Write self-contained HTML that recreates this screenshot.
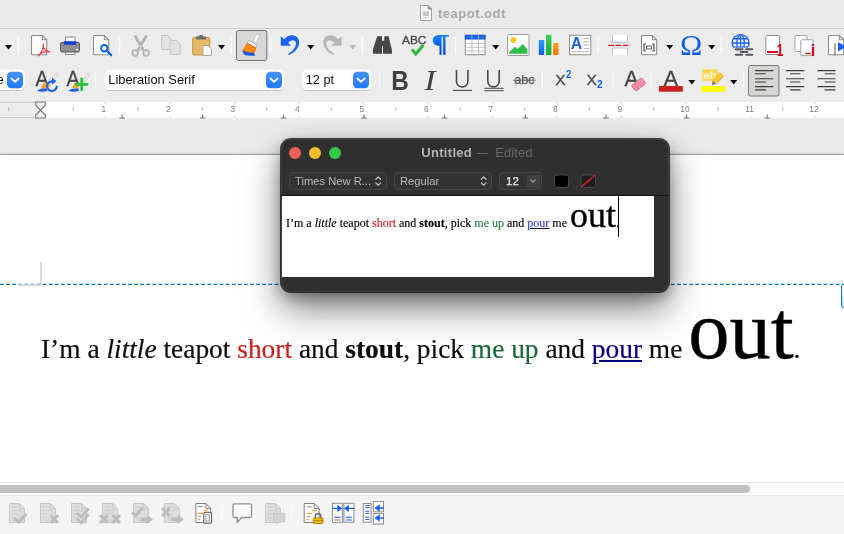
<!DOCTYPE html>
<html><head><meta charset="utf-8"><title>teapot.odt</title>
<style>
*{box-sizing:border-box;margin:0;padding:0}
html,body{width:844px;height:534px;overflow:hidden;background:#ececec;font-family:"Liberation Sans",sans-serif}
#app{position:relative;width:844px;height:534px;overflow:hidden;background:#ececec}
.abs{position:absolute}
#titlebar{left:0;top:0;width:844px;height:29px;background:#ebebeb;border-bottom:1px solid #cfcfcf}
#title{left:438.2px;top:6px;font-size:13px;font-weight:bold;color:#a8a8a8;letter-spacing:.5px;will-change:transform}
#docbg{left:0;top:118px;width:844px;height:36px;background:#ebebeb}
#page{left:0;top:154px;width:844px;height:329px;background:#fff;border-top:1px solid #9c9c9c;box-shadow:0 -1px 3px rgba(0,0,0,.09)}
#hscroll{left:0;top:482px;width:844px;height:14px;background:#fafafa;border-top:1px solid #e4e4e4;border-bottom:1px solid #e8e8e8}
#thumb{left:-6px;top:485px;width:756px;height:8px;border-radius:4px;background:#c1c1c1}
#btbbg{left:0;top:496px;width:844px;height:38px;background:#f4f4f4}
#ov{left:0;top:0;width:844px;height:534px;will-change:transform}
#ov text{font-family:"Liberation Sans",sans-serif}
.sep{stroke:#fbfbfb;stroke-width:1.2;fill:none}
#maintext{left:41px;top:282px;white-space:nowrap;font-family:"Liberation Serif",serif;font-size:27.4px;color:#0c0c0c;-webkit-text-stroke:.18px;will-change:transform}
#maintext .big{font-size:82.5px;-webkit-text-stroke:.4px #000;color:#000;margin-left:-1px}
#win{will-change:transform;left:281px;top:139px;width:388px;height:153px;border-radius:10px;background:#2f2f2f;box-shadow:inset 0 0 0 1px rgba(255,255,255,.07),0 0 0 1px rgba(0,0,0,.7),0 16px 36px rgba(0,0,0,.52),0 5px 14px rgba(0,0,0,.3)}
#wtitle{left:0;top:6px;width:388px;text-align:center;font-size:13px;color:#858585;white-space:nowrap}
.wt{top:6px;font-size:13px;white-space:nowrap}
.pop{height:18px;top:33px;border:1px solid #444;border-radius:4px;background:#323232;color:#bababa;font-size:11.2px;line-height:16px;padding-left:5px;white-space:nowrap}
#wtext{left:1px;top:57px;width:372px;height:81px;background:#fff;overflow:hidden}
#wline{left:3.7px;top:-1px;-webkit-text-stroke:.15px;white-space:nowrap;font-family:"Liberation Serif",serif;font-size:12px;color:#000;line-height:41px;will-change:transform}
#wline .big{font-size:36px;-webkit-text-stroke:.35px #000}
#caret{left:336px;top:0;width:1px;height:41px;background:#000}
</style></head><body>
<div id="app">
<div id="titlebar" class="abs"></div>
<div id="title" class="abs">teapot.odt</div>
<div id="docbg" class="abs"></div>
<div id="page" class="abs"></div>
<div id="hscroll" class="abs"></div>
<div id="thumb" class="abs"></div>
<div id="btbbg" class="abs"></div>
<svg id="ov" class="abs" width="844" height="534" viewBox="0 0 844 534"><path d="M420.5 5.5h7.5l3.5 3.5v11.5h-11z" fill="#f8f8f8" stroke="#a4a4a4"/><path d="M428 5.5l3.5 3.5h-3.5z" fill="#8a8a8a" stroke="#8a8a8a" stroke-width=".6"/><rect x="423" y="11.5" width="6" height="4.5" fill="#c4c4c4"/><path d="M423 17.5h6" stroke="#d0d0d0" stroke-width=".8"/><!-- ROW 1 -->
<g id="row1">
<path d="M5 45h7l-3.5 4.5z" fill="#000"/>
<path class="sep" d="M18.5 37v17"/>
<!-- pdf -->
<path d="M32.5 35.5h9.8l4.4 4.3v13.9q0 1-1 1h-13.2q-1 0-1-1v-17.2q0-1 1-1z" fill="#fff" stroke="#8a8a90" stroke-width="1.1"/>
<path d="M42.3 35.5v4.3h4.4" fill="none" stroke="#8a8a90" stroke-width="1.1"/>
<path d="M43.2 44c.4 3.5 0 7-5 11.9M43.2 44c-.2 3.5 1 6.6 6.8 8M38.2 55.9c3-3.9 7.3-4.7 11.8-3.9" fill="none" stroke="#f8403a" stroke-width="1.25" stroke-linecap="round"/>
<!-- printer -->
<rect x="65.5" y="37" width="9.5" height="6" fill="#fff" stroke="#8c8c8c"/>
<rect x="65.5" y="50" width="9.5" height="4.5" fill="#fff" stroke="#8c8c8c"/>
<rect x="60.5" y="42.5" width="19" height="9.5" rx="1.5" fill="#8e8e8e" stroke="#58585a"/>
<rect x="63.8" y="41.2" width="12.4" height="3.6" fill="#1442d2"/>
<rect x="76" y="49" width="2.3" height="1.3" fill="#fff"/>
<!-- preview -->
<path d="M94.5 35.5h9.8l4.4 4.3v13.9q0 1-1 1h-13.2q-1 0-1-1v-17.2q0-1 1-1z" fill="#fff" stroke="#8a8a90" stroke-width="1.1"/>
<path d="M104.3 35.5v4.3h4.4" fill="none" stroke="#8a8a90" stroke-width="1.1"/>
<circle cx="104.3" cy="48.3" r="3.2" fill="#fff" stroke="#0a64f2" stroke-width="2"/>
<path d="M106.8 50.8l4.3 4.3" stroke="#0a64f2" stroke-width="2.2" stroke-linecap="round"/>
<path class="sep" d="M119.7 37v17"/>
<!-- scissors -->
<g stroke="#b2b2b2" fill="none">
<path d="M134.8 35.5l8.7 15M146.5 35.5l-8.7 15" stroke-width="2.7"/>
<circle cx="135.2" cy="53" r="2.8" stroke-width="1.7"/>
<circle cx="146.1" cy="53" r="2.8" stroke-width="1.7"/>
</g>
<circle cx="140.6" cy="46.5" r="1" fill="#ececec"/>
<!-- copy -->
<path d="M161.7 35.5h6l3.5 3.5v10.5h-9.5z" fill="#e2e2e2" stroke="#c6c6c6"/>
<path d="M170.2 40.5h6.5l3.5 3.5v10.5h-10z" fill="#e2e2e2" stroke="#c6c6c6"/>
<!-- paste -->
<rect x="192.7" y="37.5" width="17" height="17.5" rx="1.5" fill="#e6b968" stroke="#c4923c"/>
<path d="M196 36.5h2.5c0-2 5-2 5 0h2.5v3h-10z" fill="#6e6e6e"/>
<path d="M203 45.5h5l3.5 3.5v6.5h-8.5z" fill="#fff" stroke="#a8a8a8"/>
<path d="M218 45h7l-3.5 4.5z" fill="#000"/>
<path class="sep" d="M231.4 37v17"/>
<!-- clone brush pressed -->
<rect x="236.5" y="30.5" width="30.3" height="30" rx="2" fill="#d6d9d4" stroke="#707070"/>
<path d="M253 41.1l3.2 1.8 3.4-7.4-3.2-1.8z" fill="#fff" stroke="#b0b0b0" stroke-width=".7"/>
<path d="M248.5 40.4l8.7 4.6-1.2 2.9-8.7-4.6z" fill="#f4f4f4" stroke="#a4a4a4" stroke-width=".7"/>
<path d="M247.3 43.3l8.7 4.6-2.1 5q-5.9.1-11.2-2.1z" fill="#ff8a00" stroke="#dc4a10" stroke-width=".6"/>
<path d="M242.7 50.8q5.3 2.2 11.2 2.1l1.4 2.6q-7.3.8-10.5-.5-2.2-1.5-2.1-4.2z" fill="#1c58dc"/>
<path class="sep" d="M270.5 37v17"/>
<!-- undo -->
<path d="M280.8 36.3v9.5h10.4l-3-2.9c2.3-3.4 7.3-3.9 7.8.1.3 4-3.5 8.5-8 11l1 1c6.5-3 10.5-8 10.2-13-.4-7-9.7-9.5-14.9-2.8z" fill="#1a62ea"/>
<path d="M307.2 45h7l-3.5 4.5z" fill="#000"/>
<!-- redo -->
<path transform="translate(622.4 0) scale(-1 1)" d="M280.8 36.3v9.5h10.4l-3-2.9c2.3-3.4 7.3-3.9 7.8.1.3 4-3.5 8.5-8 11l1 1c6.5-3 10.5-8 10.2-13-.4-7-9.7-9.5-14.9-2.8z" fill="#b6b6b6"/>
<path d="M349.2 45h7l-3.5 4.5z" fill="#b8b8b8"/>
<path class="sep" d="M362.4 37v17"/>
<!-- binoculars -->
<path d="M377.2 36.2h4.8v4.6h2.3v-4.6h4.3l2.7 11.3.6 2.5v3.7h-8.9v-7.5h-1v7.5h-9.1v-3.7l.6-2.5z" fill="#46464b"/>
<!-- ABC check -->
<text x="402" y="43.6" font-size="11.4" fill="#48484a" stroke="#48484a" stroke-width=".35" textLength="24.3" lengthAdjust="spacingAndGlyphs">ABC</text>
<path d="M412 49.4l3.8 4.5 7.7-8.9" fill="none" stroke="#2db83a" stroke-width="3"/>
<!-- pilcrow -->
<defs><linearGradient id="gb" x1="0" y1="0" x2="0" y2="1"><stop offset="0" stop-color="#0a84ff"/><stop offset="1" stop-color="#0a3fd8"/></linearGradient>
<linearGradient id="gb2" x1="0" y1="0" x2="0" y2="1"><stop offset="0" stop-color="#2ea0ff"/><stop offset="1" stop-color="#0a5ce8"/></linearGradient>
<linearGradient id="gg" x1="0" y1="0" x2="0" y2="1"><stop offset="0" stop-color="#3cd05a"/><stop offset="1" stop-color="#18b030"/></linearGradient>
<linearGradient id="go" x1="0" y1="0" x2="0" y2="1"><stop offset="0" stop-color="#ffa030"/><stop offset="1" stop-color="#f07800"/></linearGradient></defs>
<path d="M439.5 35h9.5l.2 1.4-3.7.4v18h-2.4v-18h-1.5v18h-2.1v-8.8c-4 0-6.7-2.2-6.7-5.7s3.5-5.3 6.7-5.3z" fill="url(#gb)"/>
<path class="sep" d="M455.6 37v17"/>
<!-- table -->
<rect x="465.3" y="35.3" width="19.7" height="19.4" fill="#fff" stroke="#8c8c8c"/>
<rect x="465.3" y="35.3" width="19.7" height="3.7" fill="#1a6cf0" stroke="#1450d0"/>
<path d="M465.3 43.4h19.7M465.3 47.2h19.7M465.3 51h19.7M471.9 35.3v19.4M478.5 35.3v19.4" stroke="#b4b4b4" fill="none" stroke-width=".8"/>
<path d="M492.2 45h7l-3.5 4.5z" fill="#000"/>
<!-- image -->
<rect x="507.5" y="34.5" width="21.5" height="21" rx="1" fill="#fcfcfc" stroke="#9a9a9a"/>
<circle cx="513.4" cy="40" r="2.9" fill="#ffc414"/>
<path d="M509.2 53.8v-1.5l5.8-5.5 2.8 2.2 5-5 4.6 5.5v4.3z" fill="#2cc04a"/>
<!-- chart -->
<rect x="538.8" y="40" width="5.4" height="15" fill="url(#gb2)"/>
<rect x="546" y="34.8" width="5.4" height="20.2" fill="url(#gg)"/>
<rect x="553.1" y="43" width="5.4" height="12" fill="url(#go)"/>
<!-- textbox -->
<rect x="569.6" y="35.3" width="21.2" height="19.4" fill="#fff" stroke="#8c8c8c"/>
<text x="570.8" y="49.3" font-size="16" font-weight="bold" fill="#1a60e8" textLength="11.5" lengthAdjust="spacingAndGlyphs">A</text>
<path d="M583.5 38.5h5.5M583.5 41.8h5.5M583.5 45.1h5.5M583.5 48.4h5.5M572 51.7h17" stroke="#b0b0b0" fill="none"/>
<path class="sep" d="M598.2 37v17"/>
<!-- page break -->
<path d="M612.5 35v7.5h15v-7.5M612.5 55v-7h15v7" fill="#fff" stroke="#c2c2c2"/>
<path d="M608.3 45.4h22" stroke="#e01020" stroke-width="1.3" stroke-dasharray="5.6 1.6" fill="none"/>
<!-- field -->
<path d="M642.5 35.5h9.8l4.4 4.3v13.9q0 1-1 1h-13.2q-1 0-1-1v-17.2q0-1 1-1z" fill="#fff" stroke="#8a8a90" stroke-width="1.1"/>
<path d="M652.3 35.5v4.3h4.4" fill="none" stroke="#8a8a90" stroke-width="1.1"/>
<path d="M645.8 44h-1.8v7h1.8M652.2 44h1.8v7h-1.8" fill="none" stroke="#4a4a4a" stroke-width="1.2"/>
<rect x="646.3" y="46" width="5.4" height="3" fill="#fff" stroke="#4a4a4a" stroke-width=".9"/>
<path d="M666.2 45h7l-3.5 4.5z" fill="#000"/>
<!-- omega -->
<text x="680" y="55" style="font-family:'Liberation Serif',serif" font-size="29" fill="#0a5cf0" textLength="22.3" lengthAdjust="spacingAndGlyphs">Ω</text>
<path d="M708.2 45h7l-3.5 4.5z" fill="#000"/>
<path class="sep" d="M721.3 37v17"/>
<!-- hyperlink -->
<circle cx="740.6" cy="43" r="8.4" fill="#fff"/>
<g fill="none" stroke="#1a62f4" stroke-width="1.4">
<circle cx="740.6" cy="43" r="8.4"/>
<ellipse cx="740.6" cy="43" rx="3.7" ry="8.4"/>
<path d="M740.6 34.6v16.8M732.2 43h16.8M733.6 38.8h14M733.6 47.2h14"/>
</g>
<path d="M733.5 49.2h11M744 49.2h10.5M738.5 52h11M733.5 54.8h11M744 54.8h10.5" stroke="#ececec" stroke-width="3.6" stroke-linecap="round" opacity=".8"/>
<path d="M735.8 49.2h6.6M746.2 49.2h6.2M740.8 52h6.6M735.8 54.8h6.6M746.2 54.8h6.2" stroke="#58585a" stroke-width="1.9" stroke-linecap="round"/>
<!-- footnote -->
<rect x="765.8" y="35.5" width="13.8" height="19" rx="1" fill="#fff" stroke="#8c8c8c"/>
<path d="M767.2 52h10.7" stroke="#d4001a" stroke-width="1.9"/>
<text x="776.8" y="55.7" font-size="16.2" font-weight="bold" fill="#d4001a" textLength="6.6" lengthAdjust="spacingAndGlyphs">1</text>
<!-- endnote -->
<rect x="795" y="35.5" width="12" height="16" rx="1" fill="#fff" stroke="#a0a0a0"/>
<rect x="800.8" y="39.8" width="12.2" height="15.8" rx="1" fill="#fff" stroke="#a0a0a0"/>
<path d="M805.3 53.5h5.5" stroke="#d4001a" stroke-width="1.3"/>
<text x="810.8" y="55.7" font-size="16.2" font-weight="bold" fill="#d4001a">i</text>
<!-- crossref -->
<path d="M829.5 35.5h9.8l4.4 4.3v13.9q0 1-1 1h-13.2q-1 0-1-1v-17.2q0-1 1-1z" fill="#fff" stroke="#8a8a90" stroke-width="1.1"/>
<path d="M839.3 35.5v4.3h4.4" fill="none" stroke="#8a8a90" stroke-width="1.1"/>
<path d="M835 43.5v12" stroke="#8a8a8a" stroke-width="1.4"/>
<path d="M838 42l8 4.8-8 4.8z" fill="#1a60f0"/>
</g>
<!-- ROW 2 -->
<g id="row2">
<defs><linearGradient id="btn" x1="0" y1="0" x2="0" y2="1"><stop offset="0" stop-color="#4693f9"/><stop offset="1" stop-color="#1f78f6"/></linearGradient>
<filter id="sh" x="-5%" y="-20%" width="110%" height="150%"><feDropShadow dx="0" dy=".6" stdDeviation=".6" flood-color="#000" flood-opacity=".28"/></filter></defs>
<!-- combo1 -->
<rect x="-10" y="69.5" width="35" height="20.6" rx="5" fill="#fff" filter="url(#sh)"/>
<rect x="7" y="71.8" width="16" height="16.4" rx="4.2" fill="url(#btn)"/>
<path d="M11.5 78.6l3.5 3.2 3.5-3.2" fill="none" stroke="#fff" stroke-width="1.9" stroke-linecap="round" stroke-linejoin="round"/>
<text x="-3.4" y="83.6" font-size="13" fill="#111">e</text>
<!-- A refresh -->
<text x="35.4" y="85.9" font-size="22.3" fill="#434347" stroke="#434347" stroke-width=".3" textLength="13" lengthAdjust="spacingAndGlyphs">A</text>
<path d="M48.3 80.5l8.2-7.3 1.3 1.3-7.3 7.8z" fill="#fafafa" stroke="#b0b0b0" stroke-width=".7"/>
<path d="M44 82.3l5.5 1.2-1.5 5.2h-7.5z" fill="#f7a028"/>
<path d="M36.8 90.5q4.2-2.5 9.8-2l.5 2.6q-5.5 1.4-10.3-.6z" fill="#1c5ee0"/>
<circle cx="51.9" cy="86.2" r="3.7" fill="#ececec"/>
<circle cx="49.6" cy="85.7" r="1" fill="#f7a028"/>
<path d="M56.7 85.6a4.8 4.8 0 1 1-4.6-4.2" fill="none" stroke="#1a60e8" stroke-width="2.1"/>
<path d="M52 77.6l4.4 3.6-4.4 3.4z" fill="#1a60e8"/>
<!-- A plus -->
<text x="66.5" y="85.9" font-size="22.3" fill="#434347" stroke="#434347" stroke-width=".3" textLength="13" lengthAdjust="spacingAndGlyphs">A</text>
<path d="M83 80.5l5.2-7.4 1.4 1.2-4.6 7.4z" fill="#fafafa" stroke="#b0b0b0" stroke-width=".7"/>
<path d="M75 82.3l4 1-1 5.3h-6z" fill="#f7a028"/>
<path d="M68 90.5q4.2-2.5 10.6-2l.4 2.6q-6 1.4-11-.6z" fill="#1c5ee0"/>
<path d="M81.7 78.8v11.2M76.4 84.4h10.8" stroke="#24c03c" stroke-width="2.7" fill="none" stroke-linecap="round"/>
<path class="sep" d="M95.5 72.3v16.7"/>
<!-- font combo -->
<rect x="104.5" y="69.5" width="179.5" height="20.6" rx="5" fill="#fff" filter="url(#sh)"/>
<text x="108.3" y="83.8" font-size="13" fill="#111" textLength="86.5" lengthAdjust="spacingAndGlyphs">Liberation Serif</text>
<rect x="266" y="71.8" width="16" height="16.4" rx="4.2" fill="url(#btn)"/>
<path d="M270.5 78.6l3.5 3.2 3.5-3.2" fill="none" stroke="#fff" stroke-width="1.9" stroke-linecap="round" stroke-linejoin="round"/>
<!-- size combo -->
<rect x="302" y="69.5" width="69.2" height="20.6" rx="5" fill="#fff" filter="url(#sh)"/>
<text x="305.8" y="83.8" font-size="13" fill="#111" textLength="28.2" lengthAdjust="spacingAndGlyphs">12 pt</text>
<rect x="353" y="71.8" width="16" height="16.4" rx="4.2" fill="url(#btn)"/>
<path d="M357.5 78.6l3.5 3.2 3.5-3.2" fill="none" stroke="#fff" stroke-width="1.9" stroke-linecap="round" stroke-linejoin="round"/>
<path class="sep" d="M379.5 72.3v16.7"/>
<!-- B I U U abc -->
<text x="391.2" y="89.7" font-size="27.3" font-weight="bold" fill="#404042" textLength="17.6" lengthAdjust="spacingAndGlyphs">B</text>
<text x="424.6" y="89.8" style="font-family:'Liberation Serif',serif" font-style="italic" font-size="30" fill="#404042" textLength="11" lengthAdjust="spacingAndGlyphs">I</text>
<path d="M456.5 70v11c0 7.8 11.4 7.8 11.4 0v-11" fill="none" stroke="#48484a" stroke-width="1.6"/>
<path d="M453 90.4h19" stroke="#48484a" stroke-width="1.1"/>
<path d="M487.8 70v11c0 7.8 11.4 7.8 11.4 0v-11" fill="none" stroke="#48484a" stroke-width="1.6"/>
<path d="M484.3 88.3h19.3M484.3 90.7h19.3" stroke="#48484a" stroke-width="1"/>
<text x="514.2" y="84" font-size="13" fill="#58585a" stroke="#58585a" stroke-width=".25" textLength="20.4" lengthAdjust="spacingAndGlyphs">abc</text>
<path d="M513.3 80.2h22.3" stroke="#58585a" stroke-width="1"/>
<path class="sep" d="M542.4 72.3v16.7"/>
<!-- sup sub -->
<text x="555.2" y="85" font-size="15" fill="#48484a" stroke="#48484a" stroke-width=".3" textLength="10.4" lengthAdjust="spacingAndGlyphs">X</text>
<text x="566" y="78" font-size="10" font-weight="bold" fill="#1a60f0" textLength="5.4" lengthAdjust="spacingAndGlyphs">2</text>
<text x="586.5" y="85" font-size="15" fill="#48484a" stroke="#48484a" stroke-width=".3" textLength="10.4" lengthAdjust="spacingAndGlyphs">X</text>
<text x="597" y="88" font-size="10" font-weight="bold" fill="#1a60f0" textLength="5.6" lengthAdjust="spacingAndGlyphs">2</text>
<path class="sep" d="M613 72.3v16.7"/>
<!-- A eraser -->
<text x="624.4" y="85.6" font-size="21.8" fill="#454548" stroke="#454548" stroke-width=".3" textLength="14" lengthAdjust="spacingAndGlyphs">A</text>
<g transform="translate(638.6 84.5) rotate(-38)"><rect x="-6.5" y="-3.7" width="13" height="7.4" rx="1.8" fill="#f090a8" stroke="#d86888" stroke-width=".8"/><path d="M-2.5-3.7v7.4" stroke="#d86888" stroke-width=".7"/></g>
<path class="sep" d="M651.3 72.3v16.7"/>
<!-- font color -->
<text x="663.4" y="85.6" font-size="21.8" fill="#454548" stroke="#454548" stroke-width=".3" textLength="14.6" lengthAdjust="spacingAndGlyphs">A</text>
<rect x="659" y="86" width="23.8" height="5.7" fill="#c9211e"/>
<path d="M688.3 80h7l-3.5 4.5z" fill="#000"/>
<!-- highlight -->
<rect x="702.3" y="69.3" width="15.7" height="11.4" fill="#ffd84a"/>
<text x="703.3" y="79.3" font-size="11.5" font-weight="bold" fill="#fff8e0" textLength="13.6" lengthAdjust="spacingAndGlyphs">ab</text>
<g transform="translate(717 79.5) rotate(-48)"><rect x="-4" y="-2.6" width="11" height="5.2" rx="1.2" fill="#f8c830" stroke="#e0a818" stroke-width=".6"/><path d="M-4-2.2l-3.5 2.2 3.5 2.2z" fill="#6a6a6a"/></g>
<rect x="701.2" y="86" width="24.2" height="5.7" fill="#ffff00"/>
<path d="M730.2 80h7l-3.5 4.5z" fill="#000"/>
<path class="sep" d="M743.6 72.3v16.7"/>
<!-- align -->
<rect x="748.5" y="65.5" width="30.5" height="30.5" rx="2" fill="#d5d8d2" stroke="#777"/>
<path d="M755 70.6h18.3M755 73.8h11M755 78.7h18.3M755 82h11M755 86.6h18.3M755 89.9h11" stroke="#3c3c3e" stroke-width="1.1"/>
<path d="M786 70.6h18.3M790 73.8h10.4M786 78.7h18.3M790 82h10.4M786 86.6h18.3M790 89.9h10.4" stroke="#3c3c3e" stroke-width="1.1"/>
<path d="M817.5 70.6h18M824.7 73.8h10.8M817.5 78.7h18M824.7 82h10.8M817.5 86.6h18M824.7 89.9h10.8" stroke="#3c3c3e" stroke-width="1.1"/>
</g>
<g id="ruler" font-size="8.4" fill="#7c7c7c" text-anchor="middle">
<rect x="0" y="102" width="844" height="16" fill="#ececec"/>
<rect x="40.5" y="102" width="804" height="16" fill="#fff"/>
<path d="M0 102.4h36M0 117.6h36" stroke="#c6c6c6" stroke-width=".9"/>
<text x="103.9" y="112.3">1</text>
<path d="M105.5 102v1.5M105.5 116.3v1.7" stroke="#cfcfcf" stroke-width="1"/>
<text x="168.4" y="112.3">2</text>
<path d="M170 102v1.5M170 116.3v1.7" stroke="#cfcfcf" stroke-width="1"/>
<text x="232.9" y="112.3">3</text>
<path d="M234.5 102v1.5M234.5 116.3v1.7" stroke="#cfcfcf" stroke-width="1"/>
<text x="297.4" y="112.3">4</text>
<path d="M299 102v1.5M299 116.3v1.7" stroke="#cfcfcf" stroke-width="1"/>
<text x="361.9" y="112.3">5</text>
<path d="M363.5 102v1.5M363.5 116.3v1.7" stroke="#cfcfcf" stroke-width="1"/>
<text x="426.4" y="112.3">6</text>
<path d="M428 102v1.5M428 116.3v1.7" stroke="#cfcfcf" stroke-width="1"/>
<text x="490.9" y="112.3">7</text>
<path d="M492.5 102v1.5M492.5 116.3v1.7" stroke="#cfcfcf" stroke-width="1"/>
<text x="555.4" y="112.3">8</text>
<path d="M557 102v1.5M557 116.3v1.7" stroke="#cfcfcf" stroke-width="1"/>
<text x="619.9" y="112.3">9</text>
<path d="M621.5 102v1.5M621.5 116.3v1.7" stroke="#cfcfcf" stroke-width="1"/>
<text x="685" y="112.3">10</text>
<path d="M686 102v1.5M686 116.3v1.7" stroke="#cfcfcf" stroke-width="1"/>
<text x="749.5" y="112.3">11</text>
<path d="M750.5 102v1.5M750.5 116.3v1.7" stroke="#cfcfcf" stroke-width="1"/>
<text x="814" y="112.3">12</text>
<path d="M815 102v1.5M815 116.3v1.7" stroke="#cfcfcf" stroke-width="1"/>
<path d="M8.8 107v4M73.2 107v4M137.8 107v4M202.2 107v4M266.8 107v4M331.2 107v4M395.8 107v4M460.2 107v4M524.8 107v4M589.2 107v4M653.8 107v4M718.2 107v4M782.8 107v4M847.2 107v4" stroke="#b8b8b8" stroke-width="1"/>
<path d="M122.1 114.5v3.5M119.3 118h5.6M202.7 114.5v3.5M199.9 118h5.6M283.4 114.5v3.5M280.6 118h5.6M364 114.5v3.5M361.2 118h5.6M444.6 114.5v3.5M441.8 118h5.6M525.3 114.5v3.5M522.5 118h5.6M606 114.5v3.5M603.2 118h5.6M686.6 114.5v3.5M683.8 118h5.6M767.2 114.5v3.5M764.5 118h5.6M847.9 114.5v3.5M845.1 118h5.6" stroke="#767676" stroke-width="1.1" fill="none"/>
<path d="M35.7 102h9.6v3.2l-9.6 9.8v3h9.6v-3l-9.6-9.8z" fill="#ececec" stroke="#787878" stroke-width="1.1"/>
</g><path d="M0 284.45h844" stroke="#0c72b8" stroke-width="1.25" stroke-dasharray="3.8 2.3" fill="none"/><path d="M41 262v22.5M18 285.2h23" stroke="#dadada" stroke-width="2" fill="none"/><path d="M841.5 285v20q0 3 3 3" fill="#bfe2f8" stroke="#1a7cc4" stroke-width="1"/><g id="btb">
<defs>
<g id="dpage"><path d="M0 0h10l5 5v14h-15z" fill="#dedede" stroke="#c6c6c6"/><path d="M10 0v5h5" fill="none" stroke="#c6c6c6"/><path d="M3 3.5h5M3 7h4M8 7h4M3 10.5h5M3 14h3M3 16.5h4" stroke="#cacaca" stroke-width=".9"/></g>
</defs>
<use href="#dpage" x="9.5" y="503.5"/>
<path d="M14.6 518.2l4.2 4 7.5-8.5" fill="none" stroke="#bcbcbc" stroke-width="2.9"/>
<use href="#dpage" x="40.5" y="503.5"/>
<path d="M50.6 515.3l7.5 7.6M58.1 515.3l-7.5 7.6" stroke="#bcbcbc" stroke-width="2.9"/>
<use href="#dpage" x="71.5" y="503.5"/>
<path d="M77 513l4.2 4 7.5-8.5M77 518.8l4.2 4 7.5-8.5" fill="none" stroke="#bcbcbc" stroke-width="2.7"/>
<use href="#dpage" x="102.7" y="503.5"/>
<path d="M100 515.3l7.5 7.6M107.5 515.3l-7.5 7.6M112.5 515.3l7.5 7.6M120 515.3l-7.5 7.6" stroke="#bcbcbc" stroke-width="2.9"/>
<use href="#dpage" x="133.7" y="503.5"/>
<path d="M131.8 512.2l3.8 3.6 7-8" fill="none" stroke="#bcbcbc" stroke-width="2.9"/>
<path d="M140.5 517.6h6.5v-2.9l6 4.7-6 4.7v-2.9h-6.5z" fill="#bcbcbc"/>
<use href="#dpage" x="164.5" y="503.5"/>
<path d="M162 508l7.6 8.4M169.6 508l-7.6 8.4" stroke="#bcbcbc" stroke-width="2.9"/>
<path d="M171.3 517.6h6.5v-2.9l6 4.7-6 4.7v-2.9h-6.5z" fill="#bcbcbc"/>
<!-- 7 -->
<path d="M195.9 503.5h10l4.8 4.8v14.2h-14.8z" fill="#fff" stroke="#7c7c7c"/><path d="M205.9 503.5v4.8h4.8" fill="none" stroke="#7c7c7c"/>
<path d="M198.2 506.5h4.6M198.2 516.3h3" stroke="#8a8a8a" stroke-width="1"/>
<path d="M203.6 510.3h4.6M198.2 513.4h4.8M198.2 519.4h2" stroke="#f59a20" stroke-width="1.1"/>
<rect x="203.8" y="512.4" width="7.7" height="10.8" rx="1" fill="#fff" stroke="#6a6a6a" stroke-width="1.2"/>
<rect x="205.8" y="514.5" width="3.7" height="6.6" fill="#f4f4f4" stroke="#8a8a8a" stroke-width=".7"/>
<path class="sep" d="M221.8 505.2v16.3"/>
<path d="M234.5 503.8h15.5q1.5 0 1.5 1.5v10.7q0 1.5-1.5 1.5h-8l-4.8 4.8v-4.8h-2.7q-1.5 0-1.5-1.5v-10.7q0-1.5 1.5-1.5z" fill="#fbfbfb" stroke="#8c8c8c" stroke-width="1.3"/>
<!-- 9 disabled -->
<use href="#dpage" x="265.5" y="503.5"/>
<path d="M273.5 513h11.3v8.6h-6l-2.3 2.4v-2.4h-3z" fill="#d4d4d4" stroke="#c4c4c4" stroke-width=".8"/>
<path class="sep" d="M291.3 505.2v16.3"/>
<!-- 10 lock -->
<path d="M304.2 503.5h10l5 5v14h-15z" fill="#fff" stroke="#7c7c7c"/><path d="M314.2 503.5v5h5" fill="none" stroke="#7c7c7c"/>
<path d="M306.7 506.8h4.7M306.7 516.7h3.5" stroke="#8a8a8a" stroke-width="1"/>
<path d="M312.2 510.6h4.5M306.7 513.5h5M306.7 519.5h2" stroke="#f59a20" stroke-width="1.1"/>
<path d="M315.3 518v-1.8a2.8 2.8 0 0 1 5.6 0v1.8" fill="none" stroke="#6c6c6c" stroke-width="1.5"/>
<rect x="313.2" y="517.9" width="9.8" height="5.5" rx=".8" fill="#f2b600" stroke="#a87a00" stroke-width=".9"/>
<path d="M313.6 520.6h9" stroke="#a87a00" stroke-width=".7"/>
<!-- 11 -->
<rect x="332.4" y="503.3" width="10" height="19" fill="#fff" stroke="#8c8c8c"/>
<rect x="343.9" y="503.3" width="10" height="19" fill="#fff" stroke="#8c8c8c"/>
<path d="M332 508.4h6M346.5 508.4h8" stroke="#1a60f0" stroke-width="1.4"/>
<path d="M337.3 504.7l5 3.7-5 3.7zM348.9 504.7l-5 3.7 5 3.7z" fill="#1a60f0"/>
<path d="M334.3 517.3h6.6M345.6 517.3h6.6M345.6 520h6.6" stroke="#1a60f0" stroke-width="1.1"/>
<path d="M334.3 520h6.6" stroke="#8c8c8c" stroke-width="1.1"/>
<!-- 12 -->
<rect x="363.3" y="503.5" width="7.7" height="18.7" fill="#fff" stroke="#8c8c8c"/>
<path d="M365.3 505.7h4M365.3 507.7h4M365.3 511.3h4M365.3 513.4h4M365.3 517.2h4M365.3 519.5h4" stroke="#1a60f0" stroke-width="1"/>
<rect x="373.3" y="501.5" width="10.2" height="10.3" fill="#fff" stroke="#8c8c8c"/>
<rect x="373.3" y="513.6" width="10.2" height="10.5" fill="#fff" stroke="#8c8c8c"/>
<path d="M378 508h6M378 518h6" stroke="#1a60f0" stroke-width="1.5"/>
<path d="M379.7 504.2l-5.3 3.8 5.3 3.8zM379.7 514.2l-5.3 3.8 5.3 3.8z" fill="#1a60f0"/>
</g>
</svg>
<div id="maintext" class="abs">I’m a <i>little</i> teapot <span style="color:#c9211e">short</span> and <b>stout</b>, pick <span style="color:#1e6a39">me up</span> and <span style="color:#000080;text-decoration:underline">pour</span> me <span class="big">out</span>.</div>
<div id="win" class="abs">
<div class="abs" style="left:8px;top:8px;width:12px;height:12px;border-radius:6px;background:#ec5f57"></div>
<div class="abs" style="left:28px;top:8px;width:12px;height:12px;border-radius:6px;background:#f4bd30"></div>
<div class="abs" style="left:48px;top:8px;width:12px;height:12px;border-radius:6px;background:#34c84a"></div>
<div class="abs wt" style="left:140.3px;color:#b2b2b2;font-weight:bold;letter-spacing:.3px">Untitled</div><div class="abs wt" style="left:196.2px;color:#6c6c6c;transform:scaleX(.85);transform-origin:0 0">—</div><div class="abs wt" style="left:214.2px;color:#6c6c6c;letter-spacing:.1px">Edited</div>
<div class="abs pop" style="left:8px;width:98px">Times New R...</div>
<div class="abs pop" style="left:113px;width:98px">Regular</div>
<div class="abs pop" style="left:218px;width:43px;color:#e8e8e8;padding-left:6px;font-size:11.5px;-webkit-text-stroke:.25px">12</div>
<div class="abs" style="left:245.5px;top:35.7px;width:13px;height:13px;border-radius:3px;background:#404040"></div>
<svg class="abs" style="left:0;top:0" width="388" height="60" viewBox="0 0 388 60" fill="none" stroke="#c4c4c4" stroke-width="1.2" stroke-linecap="round" stroke-linejoin="round">
<path d="M94.8 40.3l2.4-2.3 2.4 2.3M94.8 43.9l2.4 2.3 2.4-2.3"/>
<path d="M200.3 40.3l2.4-2.3 2.4 2.3M200.3 43.9l2.4 2.3 2.4-2.3"/>
<path d="M249.7 40.9l2.3 2.2 2.3-2.2" stroke="#a4a4a4"/>
<rect x="273.5" y="36" width="14" height="12.5" rx="2.5" fill="#000" stroke="#484848" stroke-width="1"/>
<rect x="300" y="36" width="14.5" height="12.5" rx="2.5" fill="#1c1c1c" stroke="#484848" stroke-width="1"/>
<rect x="305.5" y="40.5" width="3.5" height="3.5" fill="#5a1a1a" stroke="none"/>
<path d="M300.5 47.5l13.5-11" stroke="#e02a2a" stroke-width="1.2"/>
</svg>
<div class="abs" style="left:0;top:56px;width:388px;height:1px;background:#101010"></div>
<div id="wtext" class="abs">
<div id="wline" class="abs">I’m a <i>little</i> teapot <span style="color:#c2211e">short</span> and <b>stout</b>, pick <span style="color:#2a7b48">me up</span> and <span style="color:#3d3dd6;text-decoration:underline;text-decoration-color:#15153a">pour</span> me <span class="big">out</span>.</div>
<div id="caret" class="abs"></div>
</div>
</div>

</div>
</body></html>
